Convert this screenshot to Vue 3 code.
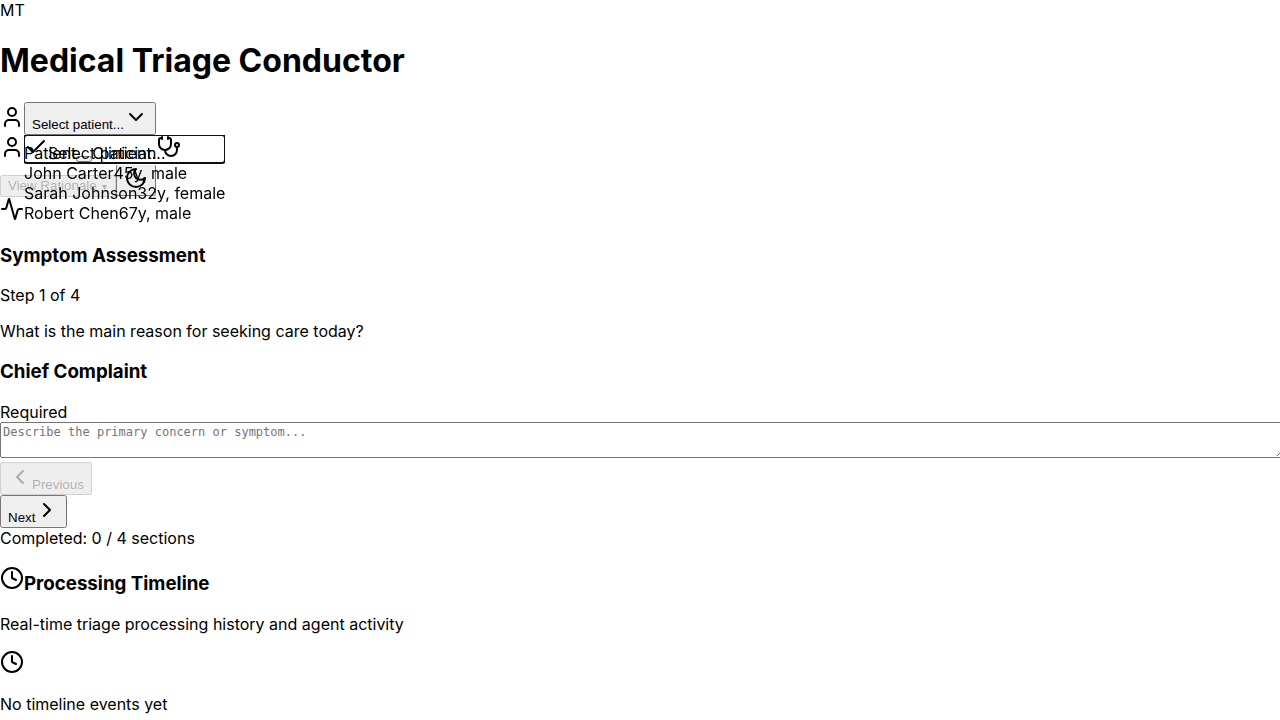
<script setup>
import { ref, onMounted } from 'vue'

const patients = [
  { name: 'John Carter', info: '45y, male' },
  { name: 'Sarah Johnson', info: '32y, female' },
  { name: 'Robert Chen', info: '67y, male' },
]
const complaint = ref('')
const clinician = ref(false)
const selected = ref(null)

onMounted(() => selected.value.focus({ preventScroll: true, focusVisible: true }))
</script>

<template>
  <div class="app">
    <header>
      <div>MT</div>
      <h1>Medical Triage Conductor</h1>
      <div class="picker">
        <svg class="icon" viewBox="0 0 24 24"><path d="M19 21v-2a4 4 0 0 0-4-4H9a4 4 0 0 0-4 4v2" /><circle cx="12" cy="7" r="4" /></svg><button type="button" aria-haspopup="listbox" aria-expanded="true">Select patient...<svg class="icon" viewBox="0 0 24 24"><path d="m6 9 6 6 6-6" /></svg></button>
        <div class="menu" role="listbox" aria-label="Patient">
          <div ref="selected" class="option current" role="option" aria-selected="true" tabindex="0"><svg class="icon" viewBox="0 0 24 24"><path d="M20 6 9 17l-5-5" /></svg><span>Select patient...</span></div>
          <div v-for="p in patients" :key="p.name" class="option" role="option" aria-selected="false" tabindex="-1"><span>{{ p.name }}</span><span>{{ p.info }}</span></div>
        </div>
      </div>
      <div>
        <svg class="icon" viewBox="0 0 24 24"><path d="M19 21v-2a4 4 0 0 0-4-4H9a4 4 0 0 0-4 4v2" /><circle cx="12" cy="7" r="4" /></svg><label for="role-switch">Patient</label><button id="role-switch" type="button" role="switch" :aria-checked="clinician" @click="clinician = !clinician"></button><label for="role-switch">Clinician</label><svg class="icon" viewBox="0 0 24 24"><path d="M11 2v2M5 2v2M5 3H4a2 2 0 0 0-2 2v4a6 6 0 0 0 12 0V5a2 2 0 0 0-2-2h-1" /><path d="M8 15a6 6 0 0 0 12 0v-3" /><circle cx="20" cy="10" r="2" /></svg>
      </div>
      <div>
        <button type="button" class="rationale" disabled>View Rationale <span class="caret">▾</span></button><button type="button" aria-label="Toggle theme"><svg class="icon" viewBox="0 0 24 24"><path d="M12 3a6 6 0 0 0 9 9 9 9 0 1 1-9-9Z" /></svg></button>
      </div>
    </header>
    <main>
      <section>
        <div><svg class="icon" viewBox="0 0 24 24"><path d="M22 12h-2.48a2 2 0 0 0-1.93 1.46l-2.35 8.36a.25.25 0 0 1-.48 0L9.24 2.18a.25.25 0 0 0-.48 0l-2.35 8.36A2 2 0 0 1 4.49 12H2" /></svg></div>
        <h3>Symptom Assessment</h3>
        <p>Step 1 of 4</p>
        <p>What is the main reason for seeking care today?</p>
        <h3 id="complaint-title">Chief Complaint</h3>
        <div>Required</div>
        <div><textarea v-model="complaint" aria-labelledby="complaint-title" placeholder="Describe the primary concern or symptom..."></textarea></div>
        <div><button type="button" disabled><svg class="icon" viewBox="0 0 24 24"><path d="m15 18-6-6 6-6" /></svg>Previous</button></div>
        <div><button type="button">Next<svg class="icon" viewBox="0 0 24 24"><path d="m9 18 6-6-6-6" /></svg></button></div>
        <div>Completed: 0 / 4 sections</div>
      </section>
      <section>
        <h3><svg class="icon" viewBox="0 0 24 24"><circle cx="12" cy="12" r="10" /><path d="M12 6v6l4 2" /></svg>Processing Timeline</h3>
        <p>Real-time triage processing history and agent activity</p>
        <svg class="icon" viewBox="0 0 24 24"><circle cx="12" cy="12" r="10" /><path d="M12 6v6l4 2" /></svg>
        <p>No timeline events yet</p>
      </section>
    </main>
  </div>
</template>

<style>
html {
  overflow: hidden;
}
</style>

<style scoped>
.app {
  font-family: Inter, sans-serif;
  font-size: 16px;
  color: #000;
}

.icon {
  width: 24px;
  height: 24px;
  fill: none;
  stroke: currentColor;
  stroke-width: 2;
  stroke-linecap: round;
  stroke-linejoin: round;
}

.picker {
  position: relative;
}

.menu {
  position: absolute;
  top: 100%;
  left: 24px;
  white-space: nowrap;
  overflow: hidden;
  will-change: transform;
}

.option {
  cursor: default;
}

.current {
  outline: auto 1px -webkit-focus-ring-color;
}

.rationale {
  padding-bottom: 2px;
}

.caret {
  display: inline-block;
  width: 8px;
  font-size: 10px;
  line-height: 10px;
}

textarea {
  width: 100%;
  font-family: "DejaVu Sans Mono", monospace;
  font-size: 12px;
  line-height: 15px;
}
</style>
